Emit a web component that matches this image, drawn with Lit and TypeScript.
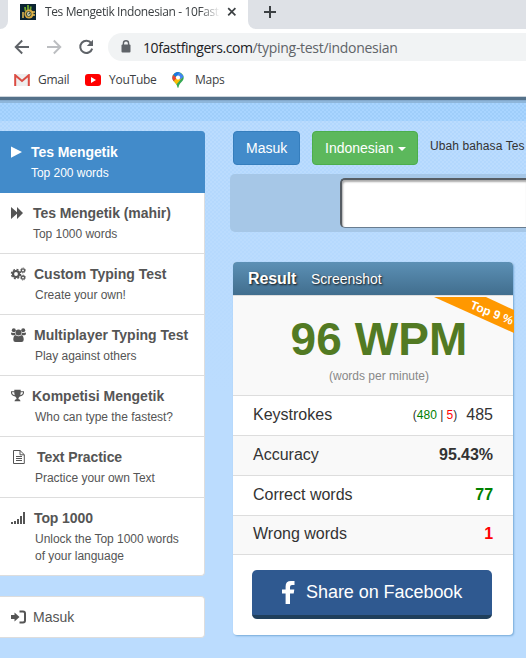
import { LitElement, html, css, svg, nothing } from "lit";
import { customElement, property } from "lit/decorators.js";

const icons: Record<string, unknown> = {
  play: svg`<path d="M0 1.5 L11 7 L0 12.8Z"/>`,
  forward: svg`<path d="M0 1 L6 6.3 V1 L12 7 L6 13 V7.7 L0 13Z"/>`,
  gears: svg`<g fill="none" stroke="currentColor"><circle cx="5" cy="7" r="3" stroke-width="2.2"/><circle cx="5" cy="7" r="4.6" stroke-width="1.3" stroke-dasharray="2 1.61"/><circle cx="12" cy="3.4" r="1.6" stroke-width="1.3"/><circle cx="12" cy="3.4" r="2.5" stroke-width=".8" stroke-dasharray="1 .96"/><circle cx="12" cy="10.6" r="1.6" stroke-width="1.3"/><circle cx="12" cy="10.6" r="2.5" stroke-width=".8" stroke-dasharray="1 .96"/></g>`,
  users: svg`<circle cx="2.8" cy="2.3" r="2"/><circle cx="12.2" cy="2.3" r="2"/><path d="M0 5.6 Q0 4.2 1 4.4 Q2.8 5.4 4 4.4 L4.6 7.3 H1.5 Q0 7.3 0 5.6ZM15 5.6 Q15 4.2 14 4.4 Q12.2 5.4 11 4.4 L10.4 7.3 H13.5 Q15 7.3 15 5.6Z"/><circle cx="7.5" cy="4.5" r="3"/><path d="M2.3 11.8 Q2.2 7.4 4.8 7.2 Q7.5 9.2 10.2 7.2 Q12.8 7.4 12.7 11.8 Q12.7 14 10.5 14 H4.5 Q2.3 14 2.3 11.8Z"/>`,
  trophy: svg`<path d="M3.3 .8 H9.7 V2.2 H13 V4 Q12.6 7 8.8 7.4 Q7.3 8.6 7.4 10 Q9.5 10.3 9.5 12.2 H3.5 Q3.5 10.3 5.6 10 Q5.7 8.6 4.2 7.4 Q.4 7 0 4 V2.2 H3.3ZM1 3.2 V4 Q1.6 5.8 3.8 6.3 Q3.3 5 3.3 3.2ZM12 3.2 H9.7 Q9.7 5 9.2 6.3 Q11.4 5.8 12 4Z" fill-rule="evenodd"/>`,
  file: svg`<path d="M2.5 .5 H9 L13.3 4.7 V13.5 H2.5Z M9 .5 V4.8 H13.3 M5 6.5 H11 M5 8.5 H11 M5 10.5 H11" fill="none" stroke="currentColor"/>`,
  signal: svg`<path d="M0 11h2v2H0zM3 10h2v3H3zM6 8h2v5H6zM9 5h2v8H9zM12 1h2v12h-2z"/>`,
  login: svg`<path d="M0 5 H3.5 V2.4 L8.5 7 L3.5 11.6 V9 H0Z"/><path d="M8.5 1.5 H12 Q14 1.5 14 3.5 V10.5 Q14 12.5 12 12.5 H8.5" fill="none" stroke="currentColor" stroke-width="2"/>`,
};

@customElement("browser-chrome")
class BrowserChrome extends LitElement {
  static styles = css`
    :host { display: block; height: 97px; background: #fff; border-bottom: 1px solid #cdd5dc; font-family: "Open Sans", "Noto Sans", sans-serif; font-size: 12px; color: #3c4043; box-sizing: content-box; }
    * { box-sizing: border-box; }
    .strip { display: flex; height: 29px; background: #dee1e6; }
    .left { width: 8px; border-bottom-right-radius: 8px; background: #dee1e6; }
    .corner { background: #fff; display: flex; }
    .tab { width: 240px; height: 29px; background: #fff; display: flex; padding: 4px 7px 0 12px; }
    .tab svg.fav { width: 16px; height: 16px; margin-right: 9px; flex: none; }
    .title { width: 175px; height: 18px; line-height: 16px; overflow: hidden; white-space: nowrap; letter-spacing: -.38px; -webkit-mask-image: linear-gradient(90deg, #000 155px, transparent 175px); }
    .close { width: 10px; height: 10px; margin: 3px 0 0 7px; flex: none; }
    .rest { flex: 1; display: block; }
    .inner { height: 29px; background: #dee1e6; border-bottom-left-radius: 8px; padding: 6px 0 0 16px; }
    .rest svg, .tab svg { display: block; }
    .bar { display: flex; height: 36px; padding: 4px 0 0 14px; }
    .bar svg { display: block; flex: none; }
    .nav { margin-top: 6px; margin-right: 16px; }
    .pill { flex: 1; height: 28px; margin-left: -2px; border-radius: 14px 0 0 14px; background: #f1f3f4; display: flex; align-items: center; padding-left: 13px; font-size: 14px; color: #202124; }
    .pill svg { margin-right: 12px; margin-top: -1px; }
    .host { letter-spacing: -.42px; }
    .path { color: #5f6368; letter-spacing: -.29px; }
    .marks { display: flex; height: 30px; align-items: center; padding-left: 14px; }
    .marks svg { flex: none; }
    .marks span { letter-spacing: -.25px; margin-top: -2px; }
    .marks .gl { width: 47px; }
    .marks .yl { width: 63px; }
    .gm { margin-right: 8px; }
    .ym { margin-right: 8px; }
    .mm { margin-right: 11px; }
  `;
  render() {
    return html`
      <div class="strip">
        <div class="corner"><div class="left"></div></div>
        <div class="tab">
          <svg class="fav" viewBox="0 0 16 16"><path fill="#0b2431" d="M0 0h16v16H0z"/><path d="M5.5 7 L5 3 M8 7V1 M10.3 7 L10.8 2.5" stroke="#6fa72f" stroke-width="1.8"/><circle cx="9" cy="10" r="4.6" fill="#d6a63e"/><path d="M3 8v6M12 8h3M12 11h3" stroke="#e5be55" stroke-width="1.5"/><circle cx="8.7" cy="10" r="2.4" fill="#e9e3bd" stroke="#3b4b27"/><path d="M7.5 10H9.5V8.6" fill="none" stroke="#334c4b"/></svg>
          <div class="title">Tes Mengetik Indonesian - 10FastFingers</div>
          <svg class="close" viewBox="0 0 10 10"><path d="M1.2 1.2l7.2 7.2M8.4 1.2L1.2 8.4" stroke="#3c4043" stroke-width="1.7"/></svg>
        </div>
        <div class="corner rest"><div class="inner"><svg width="12" height="12" viewBox="0 0 12 12"><path d="M6 0v12M0 6h12" stroke="#3c4043" stroke-width="2"/></svg></div></div>
      </div>
      <div class="bar">
        <svg class="nav" width="16" height="16" viewBox="0 0 16 16"><path d="M15 8H2M8.2 1.5L1.7 8l6.5 6.5" fill="none" stroke="#5f6368" stroke-width="1.9"/></svg>
        <svg class="nav" width="16" height="16" viewBox="0 0 16 16"><path d="M1 8h13M7.8 1.5L14.3 8l-6.5 6.5" fill="none" stroke="#bcbec1" stroke-width="1.9"/></svg>
        <svg class="nav" width="16" height="16" viewBox="0 0 16 16"><path d="M13.3 4.2A6.1 6.1 0 1 0 14.2 9.6" fill="none" stroke="#5f6368" stroke-width="2"/><path d="M15 .8V7H8.8Z" fill="#5f6368"/></svg>
        <div class="pill">
          <svg width="10" height="13" viewBox="0 0 10 13"><path d="M2.4 5V3.4a2.6 2.6 0 0 1 5.2 0V5" fill="none" stroke="#5f6368" stroke-width="1.4"/><rect x=".5" y="4.5" width="9" height="8" rx="1" fill="#5f6368"/></svg>
          <span class="host">10fastfingers.com</span><span class="path">/typing-test/indonesian</span>
        </div>
      </div>
      <div class="marks">
        <svg class="gm" width="16" height="12" viewBox="0 0 16 12"><path fill="#eee" d="M1 0h14v12H1z"/><path d="M1.2 12V1.2L8 7l6.8-5.8V12" fill="none" stroke="#db4c43" stroke-width="2"/></svg><span class="gl">Gmail</span>
        <svg class="ym" width="16" height="12" viewBox="0 0 16 12"><rect width="16" height="12" rx="3" fill="#f00"/><path d="M6 3v6l5-3z" fill="#fff"/></svg><span class="yl">YouTube</span>
        <svg class="mm" width="12" height="16" viewBox="0 0 12 16"><clipPath id="p"><path d="M6 0a5.7 5.7 0 0 1 5.7 5.7C11.7 9.5 7 10.7 6.6 15.3q-.6 1-1.2 0C5 10.7.3 9.5.3 5.7A5.7 5.7 0 0 1 6 0z"/></clipPath><g clip-path="url(#p)"><path fill="#34a853" d="M0 0h12v16H0z"/><path fill="#fbbc04" d="M0 10.5L7.5 2 10 6 3.5 13.5H0z"/><path fill="#ea4335" d="M0 2.2L5 5.8 0 11z"/><path fill="#1a73e8" d="M1 2.2L4 0h3.5L4.2 5z"/><path fill="#4285f4" d="M7.3 0L12 4.4 8.2 7.5 5 4z"/></g><circle cx="6" cy="5.6" r="2.1" fill="#fff"/></svg><span>Maps</span>
      </div>`;
  }
}

@customElement("menu-entry")
class MenuEntry extends LitElement {
  @property() icon = "";
  @property() label = "";
  @property() detail = "";
  @property({ type: Number }) gap = 8;
  @property({ type: Number }) indent = 25;
  @property({ type: Number }) track = 0;
  static styles = css`
    :host { display: block; box-sizing: border-box; height: 61px; padding: 10px 0 0 10px; border-bottom: 1px solid #ddd; border-right: 1px solid #ddd; background: #fff; color: #555; font: 12px/17px "Liberation Sans", Arial, sans-serif; }
    :host([active]) { height: 62px; padding-top: 11px; background: #428bca; border-color: #428bca; color: #fff; border-top-right-radius: 4px; }
    :host([tall]) { height: 78px; border-bottom-right-radius: 4px; }
    :host([single]) { height: 42px; border-top: 1px solid #ddd; border-radius: 0 4px 4px 0; padding-top: 10px; }
    .row { display: flex; height: 20px; align-items: center; white-space: nowrap; }
    svg { flex: none; display: block; margin-left: 1px; overflow: visible; }
    .label { font-size: 14px; font-weight: bold; line-height: 20px; }
    :host([single]) .label { font-weight: normal; }
    .detail { margin-top: 3px; white-space: pre-line; letter-spacing: -.03px; }
  `;
  render() {
    return html`<div class="row"><svg width="15" height="14" viewBox="0 0 15 14" fill="currentColor">${icons[this.icon]}</svg>
      <span class="label" style="margin-left:${this.gap}px;letter-spacing:${this.track}px">${this.label}</span></div>
      ${this.detail ? html`<div class="detail" style="margin-left:${this.indent}px">${this.detail}</div>` : nothing}`;
  }
}

@customElement("result-card")
class ResultCard extends LitElement {
  static styles = css`
    * { box-sizing: border-box; }
    :host { display: block; width: 280px; height: 373px; background: #fff; border-radius: 4px; box-shadow: 1px 1px 2px #76aad8; color: #333; font: 16px "Liberation Sans", Arial, sans-serif; }
    .head { height: 33px; border-radius: 4px 4px 0 0; background: linear-gradient(#5c90b5, #416e8e); color: #fff; display: flex; align-items: center; padding-left: 15px; text-shadow: 1px 1px 2px #111; }
    .head b { width: 63px; letter-spacing: -.1px; } .head span { font-size: 14px; margin-top: 1px; letter-spacing: -.02px; }
    .score { position: relative; height: 100px; background: #f9f9f9; border-top: 1px solid #ddd; display: flex; flex-direction: column; align-items: center; }
    .wpm { margin-top: 16px; margin-left: 12px; font-weight: bold; font-size: 46px; line-height: 54px; color: #527a23; white-space: nowrap; letter-spacing: .1px; }
    .unit { font-size: 12px; line-height: 16px; margin-top: 2px; margin-left: 12px; color: #888; }
    .ribbon { position: absolute; top: 1px; right: -1px; width: 80px; height: 37px; }
    .ribbon text { font: bold 12px "Liberation Sans", Arial, sans-serif; fill: #fff; }
    .stat { height: 40px; display: flex; justify-content: space-between; align-items: center; border-top: 1px solid #ddd; padding: 0 20px 2px 20px; }
    .stat > b { letter-spacing: -.05px; }
    .stat.short { height: 39px; } .stat.alt { background: #f9f9f9; }
    .stat small { font-size: 12px; margin-right: 9px; position: relative; top: -1px; }
    .good { color: #008000; } .bad { color: #f00; }
    .foot { border-top: 1px solid #ddd; padding: 15px 21px 0 19px; }
    .share { height: 49px; background: #2f5990; border-radius: 5px; border-bottom: 4px solid #203f5b; color: #fff; font-size: 18px; display: flex; align-items: center; padding: 0 0 1px 30px; }
    .share svg { margin-right: 11px; } .share span { letter-spacing: -.05px; white-space: nowrap; }
  `;
  render() {
    return html`
      <div class="head"><b>Result</b><span>Screenshot</span></div>
      <div class="score"><div class="wpm">96 WPM</div><div class="unit">(words per minute)</div>
        <svg class="ribbon" viewBox="0 0 80 37"><path fill="#ff9800" d="M0 0h52l28 13v23z"/><text transform="translate(35.5 11) rotate(22)">Top 9 %</text></svg></div>
      <div class="stat"><span>Keystrokes</span><span><small>(<span class="good">480</span> | <span class="bad">5</span>)</small>485</span></div>
      <div class="stat alt"><span>Accuracy</span><b>95.43%</b></div>
      <div class="stat"><span>Correct words</span><b class="good">77</b></div>
      <div class="stat short alt"><span>Wrong words</span><b class="bad">1</b></div>
      <div class="foot"><div class="share"><svg width="13" height="23" viewBox="0 0 13 23"><path fill="#fff" d="M3.6 23V12.5H0V8.4h3.6V5.4Q3.6 0 9 0H12.5V4H10Q8 4 8 6V8.4h4.3l-.6 4.1H8V23z"/></svg><span>Share on Facebook</span></div></div>`;
  }
}

@customElement("app-root")
class AppRoot extends LitElement {
  static styles = css`
    * { box-sizing: border-box; }
    :host { display: block; width: 526px; height: 658px; overflow: hidden; background: #bbdcfe; font-family: "Liberation Sans", Arial, sans-serif; }
    .rule { height: 6px; background: linear-gradient(#54718a 0 3px, #83a9cc 3px 4px, #8eb6da 4px); }
    .page { height: 555px; display: flex; background: linear-gradient(rgba(187,220,254,.1), #bbdcfe 290px), repeating-conic-gradient(#b0d6fd 0 25%, #bbdcfe 0 50%) 0 0 / 4px 4px; flex-direction: column; }
    .band { height: 18px; flex: none; background: repeating-conic-gradient(#9fcefa 0 25%, #a9d5ff 0 50%) 0 0 / 4px 4px; }
    .cols { display: flex; padding-top: 10px; }
    .side { width: 205px; flex: none; display: flex; flex-direction: column; }
    .login { margin-top: 20px; }
    .main { flex: none; width: 296px; margin-left: 25px; display: flex; flex-direction: column; }
    .tools { display: flex; height: 34px; padding-left: 3px; font-size: 14px; }
    .btn { flex: none; height: 34px; border-radius: 4px; border: 1px solid #357ebd; background: #428bca; color: #fff; display: flex; align-items: center; padding-left: 12px; width: 67px; margin-right: 12px; }
    .btn.lang { width: 106px; background: #5cb85c; border-color: #4cae4c; }
    .caret { margin: 2px 0 0 4px; border-top: 4px solid #fff; border-left: 4px solid transparent; border-right: 4px solid transparent; }
    .hint { font-size: 12px; color: #333; line-height: 31px; white-space: nowrap; letter-spacing: .1px; }
    .typing { height: 58px; margin-top: 9px; border-radius: 5px 0 0 5px; background: #a6c7e7; padding: 4px 0 0 110px; }
    .field { height: 50px; background: #fff; border: 1px solid #697d90; border-width: 2px 0 1px 2px; border-top-color: #565d64; border-left-color: #565d64; border-radius: 5px 0 0 5px; box-shadow: inset 1px 2px 2px #aaa; }
    .card { margin: 30px 0 0 3px; }
  `;
  render() {
    return html`
      <browser-chrome></browser-chrome>
      <div class="rule"></div>
      <div class="page">
        <div class="band"></div>
        <div class="cols">
          <div class="side">
            <menu-entry active icon="play" label="Tes Mengetik" detail="Top 200 words" gap="5" indent="21" track="-0.08"></menu-entry>
            <menu-entry icon="forward" label="Tes Mengetik (mahir)" detail="Top 1000 words" gap="7" indent="23" track="-0.06"></menu-entry>
            <menu-entry icon="gears" label="Custom Typing Test" detail="Create your own!"></menu-entry>
            <menu-entry icon="users" label="Multiplayer Typing Test" detail="Play against others"></menu-entry>
            <menu-entry icon="trophy" label="Kompetisi Mengetik" detail="Who can type the fastest?" gap="6"></menu-entry>
            <menu-entry icon="file" label="Text Practice" detail="Practice your own Text" gap="11" track="-0.08"></menu-entry>
            <menu-entry tall icon="signal" label="Top 1000" .detail=${"Unlock the Top 1000 words\nof your language"} track="-0.1"></menu-entry>
            <menu-entry single class="login" icon="login" label="Masuk" gap="7"></menu-entry>
          </div>
          <div class="main">
            <div class="tools"><div class="btn">Masuk</div><div class="btn lang">Indonesian<span class="caret"></span></div><div class="hint">Ubah bahasa Tes Mengetik</div></div>
            <div class="typing"><div class="field"></div></div>
            <result-card class="card"></result-card>
          </div>
        </div>
      </div>`;
  }
}
